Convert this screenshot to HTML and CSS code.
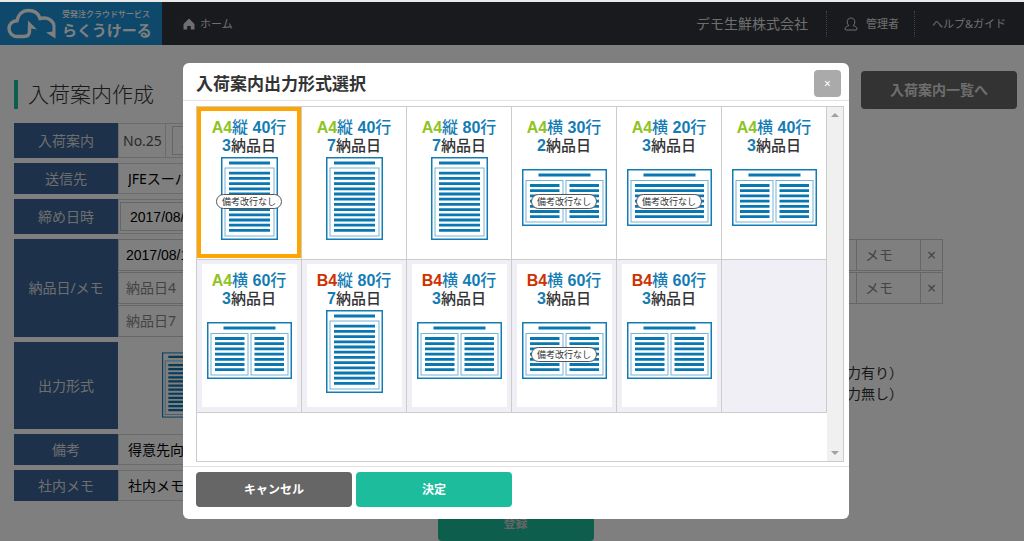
FILE: index.html
```html
<!DOCTYPE html>
<html lang="ja">
<head>
<meta charset="utf-8">
<title>入荷案内作成</title>
<link rel="stylesheet" href="styles.css">
</head>
<body>
<svg class="sprites" aria-hidden="true">
  <symbol id="doc-portrait" viewBox="0 0 57 83">
    <rect class="sheet" x=".75" y=".75" width="55.5" height="81.5"/>
    <rect class="frame" x="4" y="11" width="49" height="68"/>
    <path class="rules" d="M8 6h41M8 16.2h41M8 21.4h41M8 26.6h41M8 31.8h41M8 37h41M8 42.2h41M8 47.4h41M8 52.6h41M8 57.8h41M8 63h41M8 68.2h41M8 73.4h41"/>
  </symbol>
  <symbol id="doc-wide" viewBox="0 0 85 57">
    <rect class="sheet" x=".75" y=".75" width="83.5" height="55.5"/>
    <rect class="frame" x="4" y="11.5" width="77" height="41.5"/>
    <path class="rules" d="M16.5 6h52M8 16.5h69M8 21.7h69M8 26.9h69M8 32.1h69M8 37.3h69M8 42.5h69M8 47.7h69"/>
  </symbol>
  <symbol id="doc-split" viewBox="0 0 85 57">
    <rect class="sheet" x=".75" y=".75" width="83.5" height="55.5"/>
    <rect class="frame" x="4" y="11.5" width="37" height="41.5"/>
    <rect class="frame" x="44" y="11.5" width="37" height="41.5"/>
    <path class="rules" d="M16.5 6h52M8 16.5h29.5M8 21.7h29.5M8 26.9h29.5M8 32.1h29.5M8 37.3h29.5M8 42.5h29.5M8 47.7h29.5M47.5 16.5h29.5M47.5 21.7h29.5M47.5 26.9h29.5M47.5 32.1h29.5M47.5 37.3h29.5M47.5 42.5h29.5M47.5 47.7h29.5"/>
  </symbol>
</svg>

<header class="topbar">
  <a class="logo" href="#">
    <svg class="logo-mark" viewBox="0 0 50 32" aria-hidden="true">
      <path d="M22.500 17V23.500C22.500 27 20 28.500 16.500 28.500H10.500C5.500 28.500 2 25 2 20.500C2 16 5.500 13 10 12.800C11 7 15 2.500 21.500 2.500C27 2.500 31.500 5.500 33 10.500C39.500 9 45 11.500 47 17" fill="none" stroke="currentColor" stroke-width="3.400"/>
      <path d="M21 12.500L30 21.500L24 20.500V25H21ZM48.500 17V30.500L39 24.500L45.500 23.500V17Z" fill="currentColor"/>
    </svg>
    <span class="logo-text"><small>受発注クラウドサービス</small><strong>らくうけーる</strong></span>
  </a>
  <a class="home" href="#">
    <svg viewBox="0 0 12 12" aria-hidden="true"><path d="M6 .5L11.500 6V11.500H7.800V8H4.200V11.500H.5V6Z" fill="currentColor"/></svg>ホーム
  </a>
  <nav class="account">
    <span class="company">デモ生鮮株式会社</span>
    <a class="user" href="#">
      <svg viewBox="0 0 14 14" aria-hidden="true"><path d="M7 1C4.500 1 3.200 2.700 3.200 4.900C3.200 6.700 4 8 5 8.700C3 9 1 9.900 1 12Q1 13 2 13H12Q13 13 13 12C13 9.900 11 9 9 8.700C10 8 10.800 6.700 10.800 4.900C10.800 2.700 9.500 1 7 1Z" fill="none" stroke="currentColor"/></svg>管理者
    </a>
    <a class="help" href="#">ヘルプ&amp;ガイド</a>
  </nav>
</header>

<main class="page">
  <div class="page-head">
    <h1>入荷案内作成</h1>
    <button class="btn btn-list" type="button">入荷案内一覧へ</button>
  </div>
  <form class="form">
    <div class="row">
      <label class="name tall" for="notice">入荷案内</label>
      <div class="field narrow"><span class="number">No.25</span><input id="notice" class="boxed" value="入荷案内"></div>
    </div>
    <div class="row">
      <label class="name" for="dest">送信先</label>
      <div class="field narrow"><input id="dest" value="JFEスーパー"></div>
    </div>
    <div class="row">
      <label class="name tall" for="limit">締め日時</label>
      <div class="field narrow"><input id="limit" class="boxed latin" value="2017/08/09"></div>
    </div>
    <div class="row">
      <div class="name">納品日/メモ</div>
      <div class="days">
        <div class="day-row">
          <input class="date latin" aria-label="納品日1" value="2017/08/10">
          <input class="memo" aria-label="メモ" placeholder="メモ"><button class="clear" type="button">×</button>
        </div>
        <div class="day-row">
          <input class="date" aria-label="納品日4" placeholder="納品日4">
          <input class="memo" aria-label="メモ" placeholder="メモ"><button class="clear" type="button">×</button>
        </div>
        <div class="day-row short">
          <input class="date" aria-label="納品日7" placeholder="納品日7">
        </div>
      </div>
    </div>
    <div class="row">
      <div class="name">出力形式</div>
      <div class="format">
        <svg class="format-icon" viewBox="0 0 57 83" aria-hidden="true"><use href="#doc-portrait"/></svg>
        <p class="format-note">出力有り）<br>出力無し）</p>
      </div>
    </div>
    <div class="row">
      <label class="name" for="remark">備考</label>
      <div class="field narrow"><input id="remark" value="得意先向け"></div>
    </div>
    <div class="row">
      <label class="name" for="inner">社内メモ</label>
      <div class="field narrow"><input id="inner" value="社内メモ"></div>
    </div>
    <button class="btn btn-submit" type="button">登録</button>
  </form>
</main>

<div class="overlay">
  <section class="dialog" role="dialog" aria-modal="true" aria-labelledby="dialog-title">
    <header class="dialog-head">
      <h2 id="dialog-title">入荷案内出力形式選択</h2>
      <button class="close" type="button" aria-label="閉じる">×</button>
    </header>
    <div class="dialog-body">
      <div class="scroller">
        <div class="options">
          <label class="option"><input type="radio" name="format" checked><span class="card"><span class="size"><b class="a">A4</b>縦 <b>40</b>行</span><span class="count"><b>3</b>納品日</span><svg class="portrait"><use href="#doc-portrait"/></svg><span class="badge">備考改行なし</span></span></label>
          <label class="option"><input type="radio" name="format"><span class="card"><span class="size"><b class="a">A4</b>縦 <b>40</b>行</span><span class="count"><b>7</b>納品日</span><svg class="portrait"><use href="#doc-portrait"/></svg></span></label>
          <label class="option"><input type="radio" name="format"><span class="card"><span class="size"><b class="a">A4</b>縦 <b>80</b>行</span><span class="count"><b>7</b>納品日</span><svg class="portrait"><use href="#doc-portrait"/></svg></span></label>
          <label class="option"><input type="radio" name="format"><span class="card"><span class="size"><b class="a">A4</b>横 <b>30</b>行</span><span class="count"><b>2</b>納品日</span><svg class="landscape"><use href="#doc-split"/></svg><span class="badge">備考改行なし</span></span></label>
          <label class="option"><input type="radio" name="format"><span class="card"><span class="size"><b class="a">A4</b>横 <b>20</b>行</span><span class="count"><b>3</b>納品日</span><svg class="landscape"><use href="#doc-wide"/></svg><span class="badge">備考改行なし</span></span></label>
          <label class="option"><input type="radio" name="format"><span class="card"><span class="size"><b class="a">A4</b>横 <b>40</b>行</span><span class="count"><b>3</b>納品日</span><svg class="landscape"><use href="#doc-split"/></svg></span></label>
          <label class="option alt"><input type="radio" name="format"><span class="card"><span class="size"><b class="a">A4</b>横 <b>60</b>行</span><span class="count"><b>3</b>納品日</span><svg class="landscape"><use href="#doc-split"/></svg></span></label>
          <label class="option alt"><input type="radio" name="format"><span class="card"><span class="size"><b class="b">B4</b>縦 <b>80</b>行</span><span class="count"><b>7</b>納品日</span><svg class="portrait"><use href="#doc-portrait"/></svg></span></label>
          <label class="option alt"><input type="radio" name="format"><span class="card"><span class="size"><b class="b">B4</b>横 <b>40</b>行</span><span class="count"><b>3</b>納品日</span><svg class="landscape"><use href="#doc-split"/></svg></span></label>
          <label class="option alt"><input type="radio" name="format"><span class="card"><span class="size"><b class="b">B4</b>横 <b>60</b>行</span><span class="count"><b>3</b>納品日</span><svg class="landscape"><use href="#doc-split"/></svg><span class="badge">備考改行なし</span></span></label>
          <label class="option alt"><input type="radio" name="format"><span class="card"><span class="size"><b class="b">B4</b>横 <b>60</b>行</span><span class="count"><b>3</b>納品日</span><svg class="landscape"><use href="#doc-split"/></svg></span></label>
          <div class="option alt"></div>
        </div>
        <div class="scrollbar" aria-hidden="true"><i class="up"></i><i class="down"></i></div>
      </div>
    </div>
    <footer class="dialog-foot">
      <button class="btn btn-cancel" type="button">キャンセル</button>
      <button class="btn btn-ok" type="button">決定</button>
    </footer>
  </section>
</div>
</body>
</html>
```

FILE: styles.css
```css
* { box-sizing: border-box; }
body {
  margin: 0;
  border-top: 2px solid #e8eaea;
  min-height: 100vh;
  overflow: hidden;
  background: #fff;
  color: #333;
  font: 14px/20px "Noto Sans", "Noto Sans CJK JP", sans-serif;
}
a { color: inherit; text-decoration: none; }
button, input { font: inherit; color: inherit; margin: 0; }
.sprites { position: absolute; width: 0; height: 0; }
.sheet { fill: #fff; stroke: #147cb4; stroke-width: 1.5; }
.frame { fill: none; stroke: #74b4d6; stroke-width: 1; }
.rules { fill: none; stroke: #0877b2; stroke-width: 2.8; }

.topbar {
  display: flex;
  align-items: center;
  height: 43px;
  background: #32353c;
  color: #ddd;
  font-size: 11px;
}
.logo {
  display: flex;
  align-items: center;
  gap: 5px;
  width: 162px;
  height: 43px;
  padding-left: 7px;
  background: #1c92d8;
  color: #fff;
}
.logo-mark { width: 50px; height: 32px; }
.logo-text { display: flex; flex-direction: column; white-space: nowrap; }
.logo-text small { font-size: 8px; line-height: 12px; font-weight: 500; }
.logo-text strong { font-size: 15px; line-height: 20px; }
.home { display: flex; align-items: center; gap: 5px; margin-left: 21px; }
.home svg { width: 12px; height: 12px; }
.account { display: flex; align-items: center; margin-left: auto; padding-right: 18px; line-height: 26px; }
.company { font-size: 14px; padding-right: 18px; }
.user, .help { display: flex; align-items: center; padding-left: 17px; border-left: 1px dotted #888; }
.user { gap: 8px; padding-right: 15px; }
.user svg { width: 14px; height: 14px; }

.page { padding: 26px 7px 0 14px; }
.page-head { display: flex; align-items: flex-start; justify-content: space-between; }
h1 {
  margin: 9px 0 0;
  padding-left: 10px;
  border-left: 4px solid #1cbc9c;
  font-size: 21px;
  line-height: 29px;
  font-weight: 300;
}
.btn {
  width: 156px;
  border: 0;
  border-radius: 4px;
  color: #fff;
  font-size: 12px;
  font-weight: 700;
  line-height: 17px;
  padding: 9px 0;
}
.btn-list { background: #666; font-size: 14px; line-height: 20px; color: #ddd; }
.form { display: flex; flex-direction: column; gap: 5px; margin-top: 14px; }
.row { display: flex; }
.name {
  display: flex;
  align-items: center;
  justify-content: center;
  width: 104px;
  min-height: 31px;
  background: #3a6294;
  color: #ddd;
}
.name.tall { min-height: 35px; }
.field { display: flex; border: 1px solid #d6d6d6; }
.field.narrow { width: 600px; }
.field input { flex: 1; min-width: 0; border: 0; padding: 0 9px; background: none; color: #000; }
.field .boxed { border: 1px solid #ccc; margin: 2px 1px; }
.latin { font-family: "Liberation Sans", "Noto Sans CJK JP", sans-serif; }
.number { display: flex; align-items: center; padding: 0 3px 0 4px; margin-right: 5px; border-right: 1px solid #d6d6d6; color: #555; }
.days { display: flex; flex-direction: column; gap: 1px; width: 825px; }
.day-row { display: flex; border: 1px solid #ccc; }
.day-row.short { width: 275px; }
.day-row input, .clear { border: 0; border-left: 1px solid #ccc; background: none; padding: 5px 8px; line-height: 20px; }
.day-row .date { flex: 1; min-width: 0; padding: 5px 7px; border-left: 0; color: #000; }
.day-row .memo { width: 64px; }
.day-row .clear { width: 22px; padding: 0; color: #888; font-size: 16px; }
::placeholder { color: #888; opacity: 1; }
.format { display: flex; width: 785px; padding: 10px 0 11px 44px; }
.format-icon { width: 45px; height: 66px; }
.format-note { margin: 10px 0 0 auto; line-height: 21px; }
.btn-submit { align-self: center; background: #1cbc9c; color: #ccc; }

.overlay {
  position: fixed;
  inset: 2px 0 0;
  display: flex;
  align-items: flex-start;
  justify-content: center;
  padding: 61px 0 0 8px;
  background: rgba(0, 0, 0, .5);
}
.dialog { width: 666px; max-width: 100%; background: #fff; border-radius: 6px; }
.dialog-head {
  display: flex;
  align-items: center;
  justify-content: space-between;
  padding: 7px 8px 3px 13px;
  border-bottom: 1px solid #e2e2e2;
}
h2 { margin: 0; font-size: 17px; line-height: 24px; font-weight: 700; }
.close { width: 27px; height: 27px; padding: 0; border: 0; border-radius: 4px; background: #aaa; color: #fff; font-size: 12px; line-height: 26px; }
.dialog-body { padding: 5px 5px 4px 13px; }
.scroller { display: flex; min-height: 356px; border: 1px solid #ccc; }
.options { flex: 1; display: grid; grid-template-columns: repeat(6, 1fr); align-content: start; }
.option {
  position: relative;
  display: flex;
  justify-content: center;
  padding: 4px 4px 5px;
  border-right: 1px solid #ccc;
  border-bottom: 1px solid #ccc;
}
.option.alt { background: #f0eff6; }
.option input { position: absolute; inset: 0; margin: 0; opacity: 0; }
.option:has(input:checked) { padding: 0 0 1px; }
.option:has(input:checked) .card { border: 4px solid #ffa400; width: 100%; height: 151px; }
.card {
  position: relative;
  display: flex;
  flex-direction: column;
  align-items: center;
  width: 95px;
  height: 143px;
  padding-top: 8px;
  background: #fff;
  white-space: nowrap;
}
.size, .count { font: 500 16px/18px "Liberation Sans", "Noto Sans CJK JP", sans-serif; color: #147cb4; }
.count { font-size: 15px; color: #333; }
.card b { font-size: 16px; color: #147cb4; }
.card .a { color: #8fc31f; }
.card .b { color: #cc3300; }
.portrait { width: 57px; height: 83px; margin-top: 2px; }
.landscape { width: 85px; height: 57px; margin-top: 14px; }
.badge {
  position: absolute;
  top: 83px;
  left: 50%;
  transform: translateX(-50%);
  padding: 0 5px;
  border: 1px solid #555;
  border-radius: 8px;
  background: #fff;
  font-size: 9px;
  line-height: 13px;
}
.scrollbar { display: flex; flex-direction: column; align-items: center; justify-content: space-between; width: 16px; padding: 6px 0; background: #f0f0f0; }
.up, .down { border: 4px solid transparent; }
.up { border-top: 0; border-bottom-color: #a0a0a0; }
.down { border-bottom: 0; border-top-color: #a0a0a0; }
.dialog-foot { display: flex; gap: 4px; padding: 5px 13px 12px; border-top: 1px solid #e2e2e2; }
.btn-cancel { background: #666; }
.btn-ok { background: #1cbc9c; }
```
